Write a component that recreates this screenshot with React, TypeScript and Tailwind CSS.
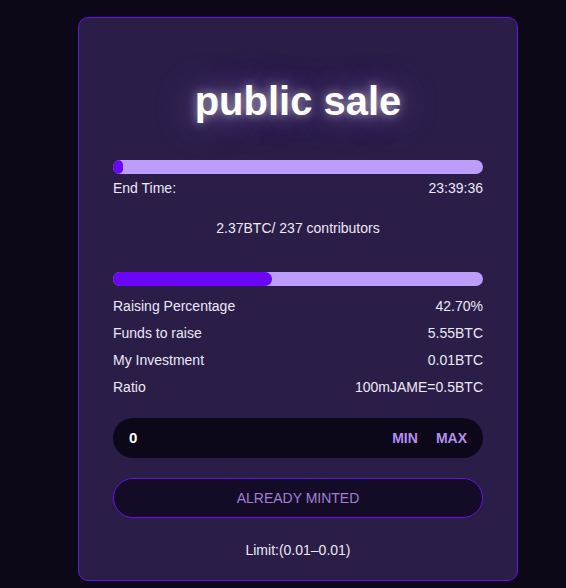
export default function App() {
  const rows = [
    ["Raising Percentage", "42.70%"],
    ["Funds to raise", "5.55BTC"],
    ["My Investment", "0.01BTC"],
    ["Ratio", "100mJAME=0.5BTC"],
  ];

  return (
    <div
      className="min-h-[588px] bg-[#0c0818] pt-[17px] text-[14px] text-[#ece8f4]"
      style={{ fontFamily: '"Liberation Sans", Arial, sans-serif' }}
    >
      <div className="ml-[78px] w-[440px] rounded-[10px] border border-[#6a10e8] bg-[#2a1e49] px-[34px] pb-[20px] pt-[60px]">
        <h1 className="text-center text-[40px] font-bold leading-[46px] text-white [text-shadow:0_0_10px_rgba(255,255,255,0.5),0_0_28px_rgba(190,160,255,0.45),0_0_44px_rgba(150,110,230,0.35)]">
          public sale
        </h1>

        <div className="mt-[36px] h-[14px] w-full overflow-hidden rounded-full bg-[#bd9cfb]">
          <div className="h-full w-[10px] rounded-full bg-[#6a05f8]" />
        </div>
        <div className="mt-[4px] flex justify-between leading-[20px]">
          <span>End Time:</span>
          <span>23:39:36</span>
        </div>

        <p className="mt-[20px] text-center leading-[20px]">2.37BTC/ 237 contributors</p>

        <div className="mt-[34px] h-[14px] w-full overflow-hidden rounded-full bg-[#bd9cfb]">
          <div className="h-full w-[43%] rounded-r-full bg-[#6a05f8]" />
        </div>
        <div className="mt-[10px] flex flex-col gap-[7px]">
          {rows.map(([label, value]) => (
            <div key={label} className="flex justify-between leading-[20px]">
              <span>{label}</span>
              <span>{value}</span>
            </div>
          ))}
        </div>

        <div className="mt-[21px] flex h-[40px] items-center rounded-full bg-[#0c0719] pl-[16px] pr-[16px]">
          <span className="flex-1 text-[15px] font-bold text-white">0</span>
          <button className="text-[14px] font-bold text-[#b58ff0]">MIN</button>
          <button className="ml-[18px] text-[14px] font-bold text-[#b58ff0]">MAX</button>
        </div>

        <button className="mt-[20px] flex h-[40px] w-full items-center justify-center rounded-full border border-[#6a10e8] bg-[#140b27] text-[14px] text-[#a27ddb]">
          ALREADY MINTED
        </button>

        <p className="mt-[22px] text-center leading-[20px]">Limit:(0.01–0.01)</p>
      </div>
    </div>
  );
}
